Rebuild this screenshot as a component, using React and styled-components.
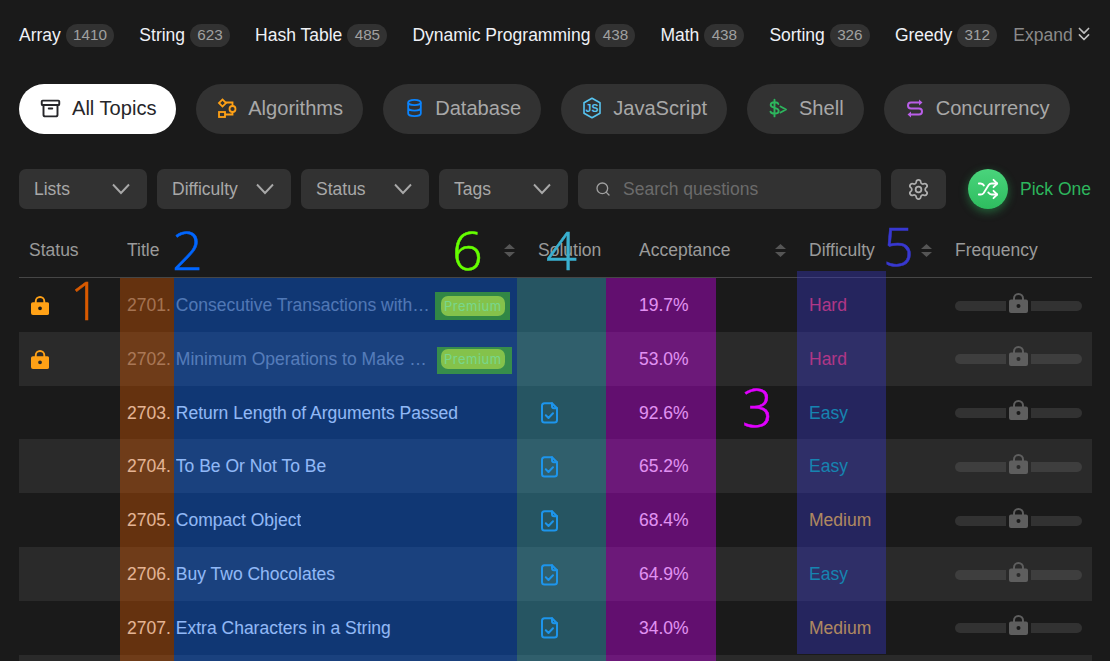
import React from 'react';
import styled, { createGlobalStyle } from 'styled-components';
import { Shuffle, Settings, Search, ChevronsDown, Archive } from 'lucide-react';

const Global = createGlobalStyle`
  html, body { margin: 0; padding: 0; background: #1a1a1a; overflow: hidden; }
  body { font-family: "Liberation Sans", Arial, sans-serif; }
`;
const Page = styled.div`
  position: relative; width: 1110px; height: 661px; overflow: hidden;
  background: #1a1a1a; padding: 0 18px 0 19px; box-sizing: border-box;
`;
const TagRow = styled.div`
  display: flex; align-items: center; gap: 25px; height: 30px; padding-top: 20px;
`;
const Tag = styled.div`display: flex; align-items: center; gap: 5px; font-size: 17.5px; color: #eff1f6; white-space: nowrap;`;
const Count = styled.span`
  background: #323232; color: #a0a0a0; font-size: 15.25px; height: 23px; line-height: 21px; padding: 0 7.3px; border-radius: 12px;
`;
const Expand = styled.div`display: flex; align-items: center; margin-left: -9px; font-size: 17.5px; color: #8a8a8a; svg { flex: none; margin-top: -2px; }`;
const TopicRow = styled.div`display: flex; gap: 20px; margin-top: 34px;`;
const Topic = styled.div`
  display: flex; align-items: center; gap: 11px; height: 50px; padding: 0 ${p => (p.$active ? 19 : 20)}px 2px 21px; box-sizing: border-box; border-radius: 25px;
  margin-right: ${p => (p.$active ? 0.7 : 0)}px;
  font-size: 20.1px; white-space: nowrap; background: ${p => (p.$active ? '#fff' : '#323232')}; color: ${p => (p.$active ? '#26262a' : '#a8a8a8')};
  svg { flex: none; }
`;
const FilterRow = styled.div`display: flex; align-items: center; gap: 10px; margin-top: 35px;`;
const Select = styled.div`
  display: flex; flex: none; align-items: center; justify-content: space-between; box-sizing: border-box; height: 40px;
  width: ${p => p.$w}px; padding: 0 17px 0 15px; border-radius: 7px; background: #323232;
  font-size: 17.5px; color: #a8a8a8;
`;
const SearchBox = styled.div`
  display: flex; flex: none; align-items: center; gap: 12px; box-sizing: border-box; width: 303px; height: 40px; padding: 0 17px;
  border-radius: 7px; background: #323232; color: #6b6b6b; font-size: 17.5px;
`;
const IconButton = styled.div`
  display: flex; flex: none; align-items: center; justify-content: center; width: 55px; height: 40px; border-radius: 7px; background: #323232; color: #b0b0b0;
`;
const Pick = styled.div`display: flex; flex: none; align-items: center; gap: 12px; margin-left: 12px; color: #2db55d; font-size: 17.5px; white-space: nowrap;`;
const PickCircle = styled.div`
  width: 40px; height: 40px; border-radius: 50%; display: flex; align-items: center; justify-content: center; color: #fff;
  background: linear-gradient(180deg, #4ad47c, #2ebd5f); box-shadow: 0 3px 10px rgba(46,189,95,.45);
`;
const Table = styled.div`margin-top: 18px; width: 1073px;`;
const cols = '101px 397px 112px 170px 146px 1fr';
const HeadRow = styled.div`
  display: grid; grid-template-columns: ${cols}; height: 50px; align-items: center; border-bottom: 1px solid #464646; color: #9a9a9a; font-size: 17.5px;
`;
const HeadCell = styled.div`display: flex; align-items: center; justify-content: space-between; padding: 0 ${p => p.$pr ?? 8}px 4px ${p => p.$pl ?? 10}px;`;
const Row = styled.div`
  display: grid; grid-template-columns: ${cols}; box-sizing: border-box; height: 53.8px; padding-top: 1.4px; align-items: center; font-size: 17.5px;
  background: ${p => (p.$even ? '#2a2a2a' : 'transparent')};
`;
const StatusCell = styled.div`padding-left: 12px; display: flex; align-items: center;`;
const TitleCell = styled.div`
  display: flex; align-items: center; padding-left: 7px; white-space: nowrap; gap: 5px; min-width: 0;
  color: ${p => (p.$locked ? 'rgba(239,241,246,.5)' : '#eff1f6')};
`;
const TitleLink = styled.span`
  display: block; overflow: hidden; text-overflow: ellipsis;
  ${p => p.$locked && 'width: 254px; flex: none;'}
`;
const Premium = styled.span`
  flex: none; box-sizing: border-box; width: 64px; height: 20px; margin-left: 6px; border-radius: 7px; background: #ffbf2a; color: #dbf7de;
  font: 13px/20px "Inter", sans-serif; text-align: center; letter-spacing: .5px;
`;
const SolutionCell = styled.div`padding-left: 24px; display: flex; color: #0a84ff;`;
const AcceptCell = styled.div`padding-left: 10px; color: #eff1f6;`;
const DiffCell = styled.div`padding-left: 10px; color: ${p => p.$c};`;
const FreqCell = styled.div`display: flex; align-items: center; padding-left: 10px; gap: 3px;`;
const FreqLock = styled.span`display: flex; margin-bottom: 6px;`;
const Bar = styled.span`display: block; height: 10px; border-radius: ${p => (p.$left ? '5px 0 0 5px' : '0 5px 5px 0')}; width: 51px; background: ${p => (p.$even ? '#3e3e3e' : '#323232')};`;
const Overlay = styled.div`
  position: absolute; left: ${p => p.$x}px; width: ${p => p.$w}px; top: ${p => p.$t}px; height: ${p => p.$h}px; background: ${p => p.$c}; pointer-events: none;
`;
const Mark = styled.span`
  position: absolute; left: ${p => p.$x}px; top: ${p => p.$y}px; color: ${p => p.$c}; font: 300 54px/54px "Open Sans", sans-serif;
  -webkit-text-stroke: .5px ${p => p.$c}; pointer-events: none;
`;

const Algo = () => (
  <svg width="20" height="20" viewBox="0 0 20 20" fill="none" stroke="#ffa116" strokeWidth="1.8">
    <rect x="3" y="2.500" width="5" height="5" transform="rotate(45 5.500 5)" />
    <rect x="2" y="14" width="6" height="5" />
    <circle cx="15.500" cy="11" r="3" />
    <path d="M8.500 4.500h7V8M15.500 14v2.500H8" />
  </svg>
);
const Db = () => (
  <svg width="20" height="20" viewBox="0 0 20 20" fill="none" stroke="#0a84ff" strokeWidth="1.8">
    <ellipse cx="10.500" cy="4.500" rx="6.300" ry="2.600" />
    <path d="M4.200 4.500v11c0 1.400 2.800 2.600 6.300 2.600s6.300-1.200 6.300-2.600v-11M4.200 10c0 1.400 2.800 2.600 6.300 2.600s6.300-1.200 6.300-2.600" />
  </svg>
);
const Js = () => (
  <svg width="20" height="22" viewBox="0 0 20 22" fill="none" stroke="#58c4f0" strokeWidth="1.600">
    <path d="M10 1.200l8 4.600v10.400l-8 4.600-8-4.600V5.800z" strokeLinejoin="round" />
    <text x="10" y="15" textAnchor="middle" fontFamily="Liberation Sans, sans-serif" fontWeight="700" fontSize="10.500" fill="#58c4f0" stroke="none">JS</text>
  </svg>
);
const Shell = () => (
  <svg width="20" height="20" viewBox="0 0 20 20" fill="none" stroke="#2db55d" strokeWidth="1.900" strokeLinecap="round" strokeLinejoin="round">
    <path d="M6.500 1.800v16.600M10.300 6c-.5-1.200-1.900-1.800-3.800-1.800-2.200 0-3.800 1-3.800 2.800 0 3.600 8 2.200 8 5.800 0 1.800-1.800 2.900-4.200 2.900-2.100 0-3.500-.7-4-2" />
    <path d="M12.500 8.500l5.500 3-5.500 3" />
  </svg>
);
const Conc = () => (
  <svg width="20" height="20" viewBox="0 0 20 20" fill="none" stroke="#b95ee8" strokeWidth="2">
    <path d="M14.500 4.500H6a3 3 0 0 0 0 6h8a3 3 0 0 1 0 6H5.500" />
    <path d="M14 1.500v6l3.500-3zM6 13.500v6l-3.500-3z" fill="#b95ee8" stroke="none" />
  </svg>
);
const Chevron = () => (
  <svg width="18" height="12" viewBox="0 0 18 12" fill="none" stroke="#a8a8a8" strokeWidth="1.900">
    <path d="M1 1.500l8 8.500 8-8.500" />
  </svg>
);
const Sort = () => (
  <svg width="11" height="13" viewBox="0 0 11 13" fill="#555"><path d="M5.500 0l5.500 5H0zM0 8h11l-5.500 5z" /></svg>
);
const SolutionIcon = () => (
  <svg width="17" height="22" viewBox="0 0 17 22" fill="none" stroke="currentColor" strokeWidth="2" strokeLinejoin="round" strokeLinecap="round">
    <path d="M3.500 1.200h7.500l5 5V18a2.600 2.600 0 0 1-2.600 2.600H3.500A2.600 2.600 0 0 1 1 18V3.800a2.600 2.600 0 0 1 2.500-2.600z" />
    <path d="M11 1.200v3a2 2 0 0 0 2 2h3" />
    <path d="M4.800 13.300l2.700 2.700 4.500-4.700" />
  </svg>
);
const LockIcon = ({ c, h = 20 }) => (
  <svg width={h * 0.95} height={h} viewBox="0 0 19 20">
    <path d="M5 8V5.500a4.500 4.500 0 0 1 9 0V8" fill="none" stroke={c} strokeWidth="2" />
    <path fillRule="evenodd" fill={c} d="M2 6.500h15a2 2 0 0 1 2 2V18a2 2 0 0 1-2 2H2a2 2 0 0 1-2-2V8.500a2 2 0 0 1 2-2zM9.500 11a2 2 0 1 0 0 4 2 2 0 0 0 0-4z" />
  </svg>
);

const tags = [['Array', 1410], ['String', 623], ['Hash Table', 485], ['Dynamic Programming', 438], ['Math', 438], ['Sorting', 326], ['Greedy', 312]];
const topics = [
  ['All Topics', <Archive key="a" size={21} strokeWidth={2.200} color="#26262a" />, true],
  ['Algorithms', <Algo key="b" />],
  ['Database', <Db key="c" />],
  ['JavaScript', <Js key="d" />],
  ['Shell', <Shell key="e" />],
  ['Concurrency', <Conc key="f" />],
];
const filters = [['Lists', 128], ['Difficulty', 134], ['Status', 128], ['Tags', 129]];
const hard = '#ff375f', easy = '#00b8a3', medium = '#ffc01e';
const rows = [
  ['2701', 'Consecutive Transactions with Increasing Amounts', '19.7%', 'Hard', hard, true],
  ['2702', 'Minimum Operations to Make Numbers Non-positive', '53.0%', 'Hard', hard, true],
  ['2703', 'Return Length of Arguments Passed', '92.6%', 'Easy', easy],
  ['2704', 'To Be Or Not To Be', '65.2%', 'Easy', easy],
  ['2705', 'Compact Object', '68.4%', 'Medium', medium],
  ['2706', 'Buy Two Chocolates', '64.9%', 'Easy', easy],
  ['2707', 'Extra Characters in a String', '34.0%', 'Medium', medium],
];

export default function App() {
  return (
    <Page>
      <Global />
      <TagRow>
        {tags.map(([n, c]) => <Tag key={n}>{n}<Count>{c}</Count></Tag>)}
        <Expand>Expand<ChevronsDown size={22} strokeWidth={1.800} color="#c0c0c0" /></Expand>
      </TagRow>
      <TopicRow>
        {topics.map(([n, ic, a]) => <Topic key={n} $active={a}>{ic}{n}</Topic>)}
      </TopicRow>
      <FilterRow>
        {filters.map(([n, w]) => <Select key={n} $w={w}>{n}<Chevron /></Select>)}
        <SearchBox><Search size={16} color="#a0a0a0" />Search questions</SearchBox>
        <IconButton><Settings size={23} strokeWidth={1.800} /></IconButton>
        <Pick><PickCircle><Shuffle size={22} /></PickCircle>Pick One</Pick>
      </FilterRow>
      <Table>
        <HeadRow>
          <HeadCell>Status</HeadCell>
          <HeadCell $pl={7} $pr={2}>Title<Sort /></HeadCell>
          <HeadCell $pl={21}>Solution</HeadCell>
          <HeadCell $pr={13}>Acceptance<Sort /></HeadCell>
          <HeadCell $pr={13}>Difficulty<Sort /></HeadCell>
          <HeadCell>Frequency</HeadCell>
        </HeadRow>
        {rows.map(([id, t, acc, d, c, locked], i) => (
          <Row key={id} $even={i % 2 === 1}>
            <StatusCell>{locked && <LockIcon c="#ffa116" h={19} />}</StatusCell>
            <TitleCell $locked={locked}>
              <span>{id}.</span>
              <TitleLink $locked={locked}>{t}</TitleLink>
              {locked && <Premium>Premium</Premium>}
            </TitleCell>
            <SolutionCell>{!locked && <SolutionIcon />}</SolutionCell>
            <AcceptCell>{acc}</AcceptCell>
            <DiffCell $c={c}>{d}</DiffCell>
            <FreqCell>
              <Bar $left $even={i % 2 === 1} />
              <FreqLock><LockIcon c="#5e5e5e" h={20} /></FreqLock>
              <Bar $even={i % 2 === 1} />
            </FreqCell>
          </Row>
        ))}
        <Row $even />
      </Table>

      <Overlay $x={120} $w={53.500} $t={278} $h={383} $c="rgba(216,88,0,.4)" />
      <Overlay $x={173.500} $w={343.500} $t={278} $h={383} $c="rgba(3,101,253,.4)" />
      <Overlay $x={517} $w={89} $t={278} $h={383} $c="rgba(58,176,208,.4)" />
      <Overlay $x={606} $w={110} $t={278} $h={383} $c="rgba(208,0,241,.4)" />
      <Overlay $x={797} $w={89} $t={271} $h={383} $c="rgba(56,56,198,.4)" />
      <Overlay $x={435} $w={75} $t={292} $h={28} $c="rgba(100,255,0,.4)" />
      <Overlay $x={437} $w={75} $t={347} $h={27} $c="rgba(100,255,0,.4)" />
      <Mark $x={70} $y={272} $c="#d95a00">1</Mark>
      <Mark $x={172} $y={222} $c="#0066ff">2</Mark>
      <Mark $x={742} $y={379} $c="#e000ff">3</Mark>
      <Mark $x={546} $y={222} $c="#3ab0d0">4</Mark>
      <Mark $x={883} $y={218} $c="#3838d0">5</Mark>
      <Mark $x={452} $y={222} $c="#66ff00">6</Mark>
    </Page>
  );
}
